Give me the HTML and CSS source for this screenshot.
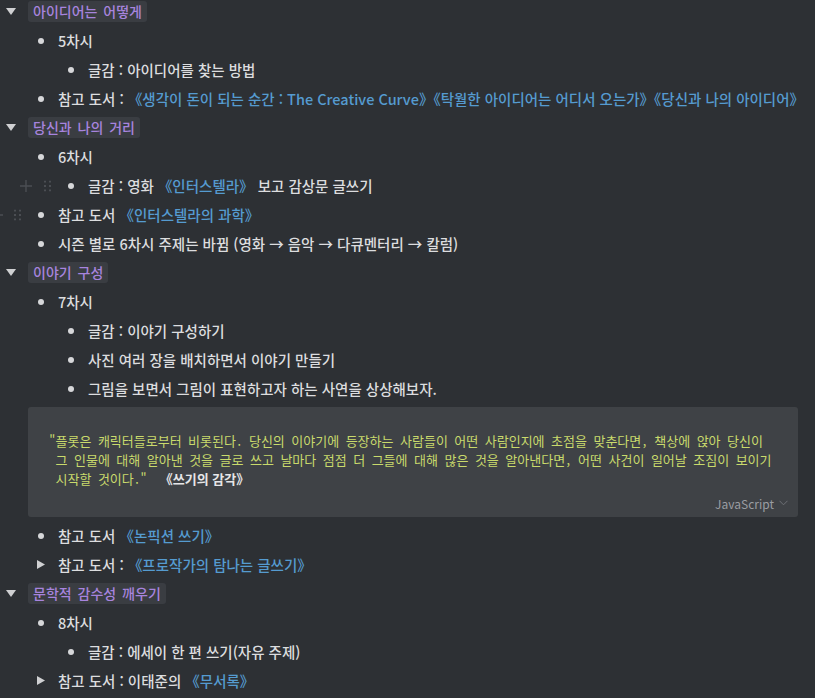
FILE: index.html
```html
<!DOCTYPE html>
<html lang="ko">
<head>
<meta charset="utf-8">
<title>글쓰기 수업</title>
<link rel="stylesheet" href="styles.css">
</head>
<body>
<div class="doc">
  <div class="row head"><span class="mk"><svg class="tri-d" width="10" height="7" viewBox="0 0 10 7"><polygon points="0,0 10,0 5,7" fill="#cfd0d2"/></svg></span><code class="pill">아이디어는 어떻게</code></div>
  <div class="row l1"><span class="mk"><i class="dot"></i></span>5차시</div>
  <div class="row l2"><span class="mk"><i class="dot"></i></span>글감 : 아이디어를 찾는 방법</div>
  <div class="row l1"><span class="mk"><i class="dot"></i></span>참고 도서 :&nbsp;<span class="link">《생각이 돈이 되는 순간 : The Creative Curve》《탁월한 아이디어는 어디서 오는가》《당신과 나의 아이디어》</span></div>

  <div class="row head"><span class="mk"><svg class="tri-d" width="10" height="7" viewBox="0 0 10 7"><polygon points="0,0 10,0 5,7" fill="#cfd0d2"/></svg></span><code class="pill">당신과 나의 거리</code></div>
  <div class="row l1"><span class="mk"><i class="dot"></i></span>6차시</div>
  <div class="row l2 hover">
    <span class="gut plus"><svg width="12" height="12" viewBox="0 0 12 12"><path d="M6 0V12M0 6H12" stroke="#4b4e53" stroke-width="1.4"/></svg></span>
    <span class="gut grip"><svg width="7" height="11" viewBox="0 0 7 11"><g fill="#4b4e53"><rect x="0" y="0" width="2" height="2"/><rect x="5" y="0" width="2" height="2"/><rect x="0" y="4.5" width="2" height="2"/><rect x="5" y="4.5" width="2" height="2"/><rect x="0" y="9" width="2" height="2"/><rect x="5" y="9" width="2" height="2"/></g></svg></span>
    <span class="mk"><i class="dot"></i></span>글감 : 영화&nbsp;<span class="link">《인터스텔라》</span>&nbsp;보고 감상문 글쓰기</div>
  <div class="row l1 hover2">
    <span class="gut plus"><svg width="12" height="12" viewBox="0 0 12 12"><path d="M6 0V12M0 6H12" stroke="#4b4e53" stroke-width="1.4"/></svg></span>
    <span class="gut grip"><svg width="7" height="11" viewBox="0 0 7 11"><g fill="#4b4e53"><rect x="0" y="0" width="2" height="2"/><rect x="5" y="0" width="2" height="2"/><rect x="0" y="4.5" width="2" height="2"/><rect x="5" y="4.5" width="2" height="2"/><rect x="0" y="9" width="2" height="2"/><rect x="5" y="9" width="2" height="2"/></g></svg></span>
    <span class="mk"><i class="dot"></i></span>참고 도서&nbsp;<span class="link">《인터스텔라의 과학》</span></div>
  <div class="row l1"><span class="mk"><i class="dot"></i></span>시즌 별로 6차시 주제는 바뀜 (영화 → 음악 → 다큐멘터리 → 칼럼)</div>

  <div class="row head"><span class="mk"><svg class="tri-d" width="10" height="7" viewBox="0 0 10 7"><polygon points="0,0 10,0 5,7" fill="#cfd0d2"/></svg></span><code class="pill">이야기 구성</code></div>
  <div class="row l1"><span class="mk"><i class="dot"></i></span>7차시</div>
  <div class="row l2"><span class="mk"><i class="dot"></i></span>글감 : 이야기 구성하기</div>
  <div class="row l2"><span class="mk"><i class="dot"></i></span>사진 여러 장을 배치하면서 이야기 만들기</div>
  <div class="row l2"><span class="mk"><i class="dot"></i></span>그림을 보면서 그림이 표현하고자 하는 사연을 상상해보자.</div>

  <div class="codeblock">
    <pre class="code">"플롯은 캐릭터들로부터 비롯된다. 당신의 이야기에 등장하는 사람들이 어떤 사람인지에 초점을 맞춘다면, 책상에 앉아 당신이
 그 인물에 대해 알아낸 것을 글로 쓰고 날마다 점점 더 그들에 대해 많은 것을 알아낸다면, 어떤 사건이 일어날 조짐이 보이기
 시작할 것이다."  <b class="src">《쓰기의 감각》</b></pre>
    <div class="lang">JavaScript<svg width="9" height="6" viewBox="0 0 9 6"><path d="M0.5 0.8L4.5 4.8L8.5 0.8" fill="none" stroke="#6e7176" stroke-width="1"/></svg></div>
  </div>

  <div class="row l1"><span class="mk"><i class="dot"></i></span>참고 도서&nbsp;<span class="link">《논픽션 쓰기》</span></div>
  <div class="row l1"><span class="mk"><svg class="tri-r" width="8" height="9" viewBox="0 0 8 9"><polygon points="0,0 8,4.5 0,9" fill="#cfd0d2"/></svg></span>참고 도서 :&nbsp;<span class="link">《프로작가의 탐나는 글쓰기》</span></div>

  <div class="row head"><span class="mk"><svg class="tri-d" width="10" height="7" viewBox="0 0 10 7"><polygon points="0,0 10,0 5,7" fill="#cfd0d2"/></svg></span><code class="pill">문학적 감수성 깨우기</code></div>
  <div class="row l1"><span class="mk"><i class="dot"></i></span>8차시</div>
  <div class="row l2"><span class="mk"><i class="dot"></i></span>글감 : 에세이 한 편 쓰기(자유 주제)</div>
  <div class="row l1"><span class="mk"><svg class="tri-r" width="8" height="9" viewBox="0 0 8 9"><polygon points="0,0 8,4.5 0,9" fill="#cfd0d2"/></svg></span>참고 도서 : 이태준의&nbsp;<span class="link">《무서록》</span></div>
</div>
</body>
</html>
```

FILE: styles.css
```css
html, body {
  margin: 0;
  padding: 0;
  background: #2d3034;
}

body {
  width: 815px;
  height: 698px;
  overflow: hidden;
  font-family: "Noto Sans CJK KR", "Noto Sans", sans-serif;
  font-size: 14.5px;
  font-weight: 500;
  color: #dcdddf;
}

.doc {
  display: flex;
  flex-direction: column;
  margin-top: -3px;
}

.row {
  position: relative;
  display: flex;
  align-items: center;
  height: 29px;
  white-space: nowrap;
}

.head { padding-left: 6px; }
.l1 { padding-left: 28px; }
.l2 { padding-left: 58px; }

.mk {
  flex: none;
  display: flex;
  align-items: center;
  width: 30px;
  box-sizing: border-box;
  padding-left: 10px;
}

.head .mk {
  width: 22px;
  padding-left: 0;
}

.mk .tri-r { margin-left: -1px; }

.dot {
  display: block;
  width: 6px;
  height: 6px;
  border-radius: 50%;
  background: #d6d7d9;
}

.pill {
  font-family: "Noto Sans CJK KR", "DejaVu Sans Mono", monospace;
  font-size: 14px;
  font-weight: 500;
  color: #a784de;
  background: #3a3d42;
  border-radius: 3px;
  padding: 0 5px;
  height: 21px;
  line-height: 21px;
  word-spacing: 2px;
}

.link {
  color: #559bd0;
}

.gut {
  position: absolute;
  top: 50%;
  display: flex;
}

.hover .plus { left: 20px; transform: translateY(-50%); }
.hover .grip { left: 44px; transform: translateY(-50%); }
.hover2 .plus { left: -9px; transform: translateY(-50%); }
.hover2 .grip { left: 14px; transform: translateY(-50%); }

.codeblock {
  margin: 4px 17px 4px 28px;
  background: #3f4246;
  border-radius: 3px;
  padding: 24px 10px 4px 21px;
  display: flex;
  flex-direction: column;
}

.code {
  margin: 0;
  font-family: "Noto Sans Mono CJK KR", "Noto Sans CJK KR", "DejaVu Sans Mono", monospace;
  font-size: 13px;
  font-weight: 400;
  line-height: 19px;
  color: #c9da6c;
  white-space: pre;
}

.src {
  font-family: "Noto Sans CJK KR", sans-serif;
  font-size: 13px;
  font-weight: 700;
  color: #e6e6e8;
}

.lang {
  margin-top: 5px;
  height: 20px;
  display: flex;
  align-items: center;
  justify-content: flex-end;
  gap: 5px;
  font-size: 12px;
  font-weight: 400;
  color: #9a9da2;
}
```
